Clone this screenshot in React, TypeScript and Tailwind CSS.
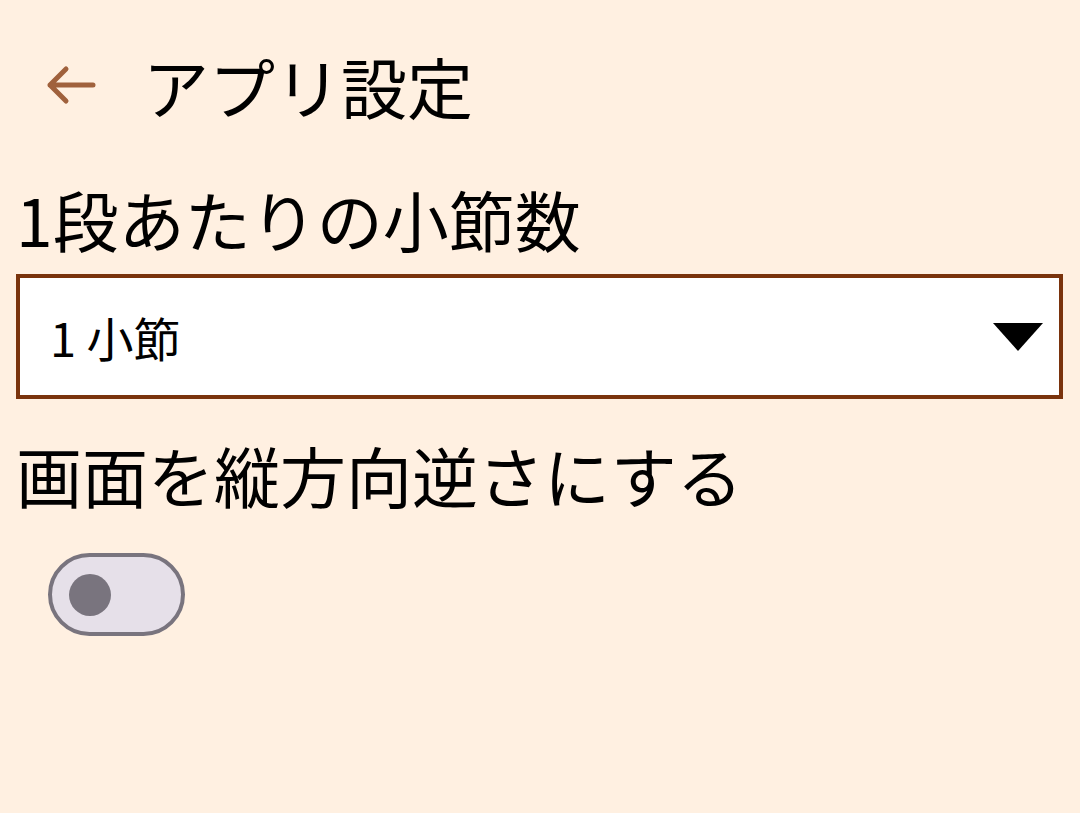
import { useState } from 'react';

const font = { fontFamily: '"Noto Sans CJK JP", "Noto Sans", sans-serif' };

function BackArrow() {
  return (
    <svg width="52" height="44" viewBox="0 0 52 44" fill="none" className="text-[#a0613c]">
      <path
        d="M48 22H5M5 22L21 6M5 22L21 38"
        stroke="currentColor"
        strokeWidth="5"
        strokeLinecap="round"
        strokeLinejoin="round"
      />
    </svg>
  );
}

function Toggle({ on, onChange }: { on: boolean; onChange: (v: boolean) => void }) {
  return (
    <button
      onClick={() => onChange(!on)}
      className="relative h-[83px] w-[137px] rounded-full border-[4px] border-[#79747e] bg-[#e6e0e9]"
    >
      <span className="absolute left-[17px] top-1/2 h-[42px] w-[42px] -translate-y-1/2 rounded-full bg-[#79747e]" />
    </button>
  );
}

export default function App() {
  const [flip, setFlip] = useState(false);

  return (
    <div className="min-h-screen w-full bg-[#fff0e1] text-black" style={font}>
      <div className="flex h-[170px] items-center">
        <div className="ml-[45px] flex items-center">
          <BackArrow />
        </div>
        <h1 className="ml-[46px] text-[66px] leading-none">アプリ設定</h1>
      </div>

      <div className="px-[16px]">
        <div className="mt-[4px] h-[88px] text-[66px] leading-[88px]">1段あたりの小節数</div>

        <div className="mt-[12px] flex h-[125px] w-[1047px] items-center justify-between border-[4px] border-[#7a330c] bg-white pl-[30px] pr-[16px]">
          <span className="text-[47px] leading-none">1 小節</span>
          <svg width="50" height="28" viewBox="0 0 50 28">
            <path d="M0 0H50L25 28Z" fill="#000" />
          </svg>
        </div>

        <div className="mt-[31px] h-[88px] text-[66px] leading-[88px]">画面を縦方向逆さにする</div>

        <div className="mt-[35px] pl-[32px]">
          <Toggle on={flip} onChange={setFlip} />
        </div>
      </div>
    </div>
  );
}
